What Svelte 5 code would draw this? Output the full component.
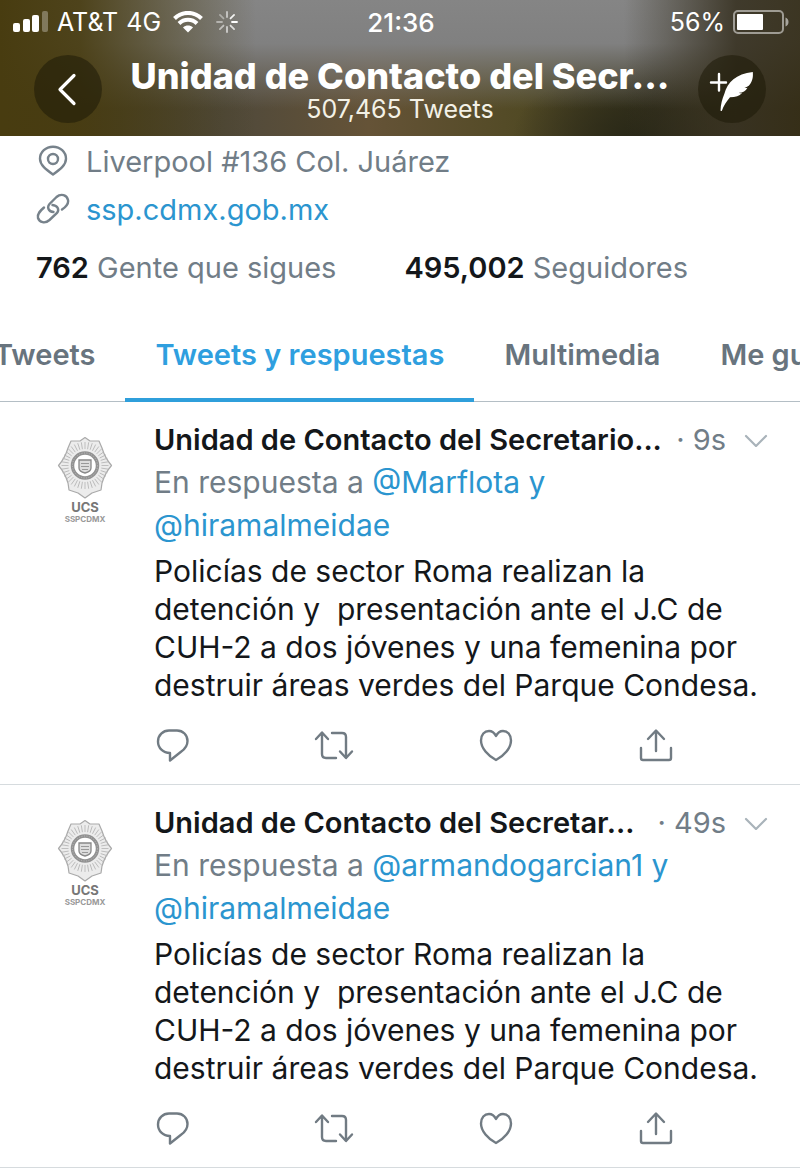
<script>
  const tabs = [
    { label: 'Tweets', active: false },
    { label: 'Tweets y respuestas', active: true },
    { label: 'Multimedia', active: false },
    { label: 'Me gusta', active: false }
  ];

  const text =
    'Policías de sector Roma realizan la detención y \u00a0presentación ante el J.C de CUH-2 a dos jóvenes y una femenina por destruir áreas verdes del Parque Condesa.';

  const tweets = [
    { name: 'Unidad de Contacto del Secretario...', time: '9s', to: '@Marflota', also: '@hiramalmeidae', text },
    { name: 'Unidad de Contacto del Secretar...', time: '49s', to: '@armandogarcian1', also: '@hiramalmeidae', text }
  ];

  const rays = Array.from({ length: 40 }, (_, i) => i * 9);
  const spokes = [1, 0.75, 0.65, 0.55, 0.45, 0.4, 0.6, 0.9];
</script>

<div class="page">
  <header>
    <div class="status">
      <div class="carrier">
        <svg class="signal" width="36" height="22" viewBox="0 0 36 22" fill="#fff" aria-hidden="true">
          <rect x="0" y="12" width="7" height="9" rx="2" />
          <rect x="10" y="8" width="7" height="13" rx="2" />
          <rect x="19" y="4" width="7" height="17" rx="2" />
          <rect x="29" y="0" width="6" height="21" rx="2" opacity=".3" />
        </svg>
        <span>AT&amp;T</span>
        <span>4G</span>
        <svg class="wifi" width="30" height="22" viewBox="0 0 30 22" aria-hidden="true">
          <path d="M1.500 7.500C9 0 21 0 28.500 7.500M6 12.500c5-5 13-5 18 0" fill="none" stroke="#fff" stroke-width="4" />
          <path d="M15 21.500l-5-5c3-2.600 7-2.600 10 0z" fill="#fff" />
        </svg>
        <svg class="spinner" width="22" height="22" viewBox="0 0 22 22" aria-hidden="true">
          {#each spokes as o, i}
            <path d="M16 11h5" stroke="#fff" stroke-width="1.800" stroke-linecap="round" opacity={o} transform="rotate({i * 45} 11 11)" />
          {/each}
        </svg>
      </div>
      <span class="clock">21:36</span>
      <div class="power">
        <span>56%</span>
        <svg width="56" height="26" viewBox="0 0 56 26" aria-hidden="true">
          <rect x="1" y="2" width="49" height="22" rx="4" fill="none" stroke="#fff" stroke-opacity=".5" stroke-width="2" />
          <rect x="4" y="5" width="26" height="16" rx="1" fill="#fff" />
          <path d="M52.500 8.500c4 1 4 8 0 9z" fill="#fff" opacity=".55" />
        </svg>
      </div>
    </div>
    <div class="bar">
      <button class="round" aria-label="Atrás">
        <svg width="68" height="68" viewBox="0 0 68 68" fill="none" stroke="#fff" stroke-width="3.200" stroke-linecap="round" stroke-linejoin="round">
          <path d="M40 20.500L26 34.500l14 14" />
        </svg>
      </button>
      <div class="heading">
        <h1>Unidad de Contacto del Secr...</h1>
        <p>507,465 Tweets</p>
      </div>
      <button class="round" aria-label="Redactar">
        <svg width="68" height="68" viewBox="0 0 68 68">
          <path d="M13 27.500h15M21 19v16.500" stroke="#fff" stroke-width="2.400" stroke-linecap="round" fill="none" />
          <path d="M54.800 17c.6 6-1 10-3 12.500-1.300 1.700-3 2.700-5.300 3 .9.500 2 .5 3 .2-2 3.500-4.500 4.800-8.500 5 1 .6 2 .7 3 .4-2.500 3-6.500 4.200-12 4.200-3.500 4.200-6.500 8.700-8.200 13.700l-1.300-.3c.2-6.700 1.800-11.700 3.800-16.700C29.500 27 38 19 54.800 17z" fill="#fff" />
        </svg>
      </button>
    </div>
  </header>

  <section class="profile">
    <div class="info">
      <svg width="34" height="34" viewBox="0 0 34 34" fill="none" stroke="#77828b" stroke-width="2.400">
        <path d="M17 30.500C10 25.500 4 21 4 14.700a13 12 0 0 1 26 0C30 21 24 25.500 17 30.500z" stroke-linejoin="round" />
        <circle cx="17" cy="15" r="5" />
      </svg>
      <span>Liverpool #136 Col. Juárez</span>
    </div>
    <div class="info">
      <svg width="34" height="34" viewBox="0 0 34 34" fill="none" stroke="#77828b" stroke-width="2.400" stroke-linecap="round">
        <path d="M17.500 20C12 19.500 11 15 13.500 12L20.500 5C25 1 31 3 32 8C33 12.500 29 15.500 26 17.500" />
        <path d="M16.500 13C22 13.500 23.500 18 21 21L13.500 28C9 32 3.500 30.500 2 26C1 21.500 4.500 18.500 8 15.500" />
      </svg>
      <a href="#site">ssp.cdmx.gob.mx</a>
    </div>
    <div class="counts">
      <a href="#following"><b>762</b> Gente que sigues</a>
      <a href="#followers"><b>495,002</b> Seguidores</a>
    </div>
  </section>

  <nav>
    {#each tabs as tab}
      <a href="#tab" class:active={tab.active}>{tab.label}</a>
    {/each}
  </nav>

  <main>
    {#each tweets as t}
      <article>
        <div class="avatar">
          <svg width="56" height="64" viewBox="0 0 56 64" aria-hidden="true">
            <path d="M28 1.500L33 5L42 5L45 12Q48 22 54.500 29.500Q48 37 45 47L44 54L35 57L28 62L21 57L12 54L11 47Q8 37 1.500 29.500Q8 22 11 12L14 5L23 5z" fill="#ececec" stroke="#aaa" stroke-width="1.200" stroke-linejoin="round" />
            {#each rays as r}
              <path d="M28 13V6" stroke="#b4b4b4" stroke-width=".8" transform="rotate({r} 28 29.500)" />
            {/each}
            <circle cx="28" cy="29.500" r="12.500" fill="#fff" stroke="#929292" stroke-width="3.500" />
            <circle cx="28" cy="29.500" r="12.500" fill="none" stroke="#bbb" stroke-dasharray="1 1.500" />
            <path d="M22 24h12v8c0 3-2 4-6 5-4-1-6-2-6-5z" fill="#ddd" stroke="#888" stroke-width="1.300" />
            <path d="M24 27.500h8M24 30.500h8M25 33.500h6" stroke="#999" />
          </svg>
          <span class="ucs">UCS</span>
          <span class="ssp">SSPCDMX</span>
        </div>
        <div class="content">
          <div class="top">
            <h2>{t.name}</h2>
            <span class="time">· {t.time}</span>
            <button class="more" aria-label="Más opciones">
              <svg width="24" height="16" viewBox="0 0 24 16" fill="none" stroke="#a9b3ba" stroke-width="2.200" stroke-linecap="round"><path d="M2 5l10 10L22 5" /></svg>
            </button>
          </div>
          <p class="reply">En respuesta a <a href="#user">{t.to} y</a><br /><a href="#user">{t.also}</a></p>
          <p class="text">{t.text}</p>
          <div class="actions">
            <button aria-label="Responder">
              <svg width="36" height="36" viewBox="0 0 36 36"><path d="M15 3.500h8c6 0 10.500 4.500 10.500 10.500 0 5-2.500 8-6.500 10.800L16 33.500V26C9 26 4 21 4 14.500S9 3.500 15 3.500z" /></svg>
            </button>
            <button aria-label="Retuitear">
              <svg width="40" height="36" viewBox="0 0 40 36"><path d="M2 12l6-6.500 6 6.500M8 6v21q0 4 4 4h10M18 6h10q4 0 4 4v20M26 24.500l6 6.500 6-6.500" /></svg>
            </button>
            <button aria-label="Me gusta">
              <svg width="36" height="36" viewBox="0 0 36 36"><path d="M18 33C10 29 3 21 3 13.500 3 7.500 6.500 4 11 4c3.500 0 5.500 2 7 5 1.500-3 3.500-5 7-5 4.500 0 8 3.500 8 9.500C33 21 26 29 18 33z" /></svg>
            </button>
            <button aria-label="Compartir">
              <svg width="36" height="36" viewBox="0 0 36 36"><path d="M10 12l8-8.500 8 8.500M18 4v20M3 21v10q0 2 2 2h26q2 0 2-2V21" /></svg>
            </button>
          </div>
        </div>
      </article>
    {/each}
  </main>
</div>

<style>
  :global(body) {
    margin: 0;
    background: #fff;
  }
  .page {
    font-family: Inter, 'Liberation Sans', sans-serif;
    font-optical-sizing: none;
    font-size: 29px;
    color: #14171a;
    overflow: hidden;
  }
  h1, h2, p { margin: 0; }
  a { color: #2b95cf; text-decoration: none; }
  button {
    border: 0;
    padding: 0;
    background: none;
    display: block;
    cursor: pointer;
  }
  svg { display: block; flex: none; }

  header {
    color: #fff;
    background:
      linear-gradient(90deg, #483c10 0%, rgba(72, 60, 16, 0.9) 10%, rgba(72, 60, 16, 0) 32%, rgba(50, 45, 30, 0) 78%, rgba(56, 50, 34, 0.9) 92%, rgba(52, 45, 24, 0.9) 100%),
      linear-gradient(180deg, #858585 0%, #808080 32%, rgba(128, 127, 125, 0) 80%),
      radial-gradient(ellipse 16% 50% at 80% 100%, #292817, rgba(41, 40, 23, 0)),
      linear-gradient(90deg, #3f3a22 0%, #4f493b 28%, #655337 46%, #524a25 65%, #332f1c 82%, #453b18 100%);
  }
  .status {
    display: grid;
    grid-template-columns: 1fr auto 1fr;
    align-items: center;
    height: 44px;
    padding: 0 11px 0 13px;
    font-size: 25px;
  }
  .carrier, .power { display: flex; align-items: center; gap: 8px; }
  .power { justify-content: flex-end; }
  .wifi { margin-left: 4px; }
  .spinner { margin-left: 5px; }
  .clock { font-size: 26px; font-weight: 500; }
  .bar {
    display: flex;
    align-items: center;
    justify-content: space-between;
    padding: 11px 34px 13px;
  }
  .round {
    width: 68px;
    height: 68px;
    border-radius: 50%;
    background: rgba(30, 25, 8, 0.55);
  }
  .heading {
    text-align: center;
    white-space: nowrap;
    padding-top: 2px;
  }
  h1 { font-size: 36px; line-height: 38px; font-weight: 800; }
  .heading p { font-size: 25px; line-height: 28px; color: #f3f1e6; }

  .profile { padding: 1px 36px 0; color: #717d87; }
  .info {
    display: flex;
    align-items: center;
    gap: 16px;
    height: 48px;
  }
  .counts { display: flex; gap: 68px; line-height: 48px; padding-top: 11px; }
  .counts a { color: #717d87; }
  .counts b { color: #14171a; font-weight: 600; }

  nav {
    display: flex;
    border-bottom: 1px solid #b4bec5;
    margin: 16px -100px 0 -36px;
    white-space: nowrap;
  }
  nav a {
    color: #68747e;
    font-weight: 600;
    line-height: 40px;
    padding: 27px 30px 23px;
    border-bottom: 4px solid transparent;
    margin-bottom: -1px;
  }
  nav a.active { color: #2f9fdf; border-color: #2f9fdb; }

  article {
    display: flex;
    gap: 19px;
    padding: 15px 32px 21px 35px;
    border-bottom: 1px solid #d6dbde;
  }
  .avatar {
    display: flex;
    flex-direction: column;
    align-items: center;
    width: 100px;
    padding-top: 19px;
    font-weight: 700;
  }
  .ucs { font-size: 13px; line-height: 14px; color: #777; }
  .ssp { font-size: 8px; line-height: 10px; color: #999; }
  .content { flex: 1; min-width: 0; }
  .top { display: flex; align-items: center; height: 44px; white-space: nowrap; }
  h2 { font-size: 29px; font-weight: 600; }
  .time { margin-left: auto; color: #717d87; }
  .more { margin-left: 18px; }
  .reply { font-size: 30px; line-height: 43px; color: #717d87; }
  .text { font-size: 30px; line-height: 38px; padding-top: 5px; }
  .actions {
    display: flex;
    justify-content: space-between;
    padding: 23px 94px 0 0;
  }
  .actions svg {
    fill: none;
    stroke: #717b83;
    stroke-width: 2.4;
    stroke-linecap: round;
    stroke-linejoin: round;
  }
</style>
